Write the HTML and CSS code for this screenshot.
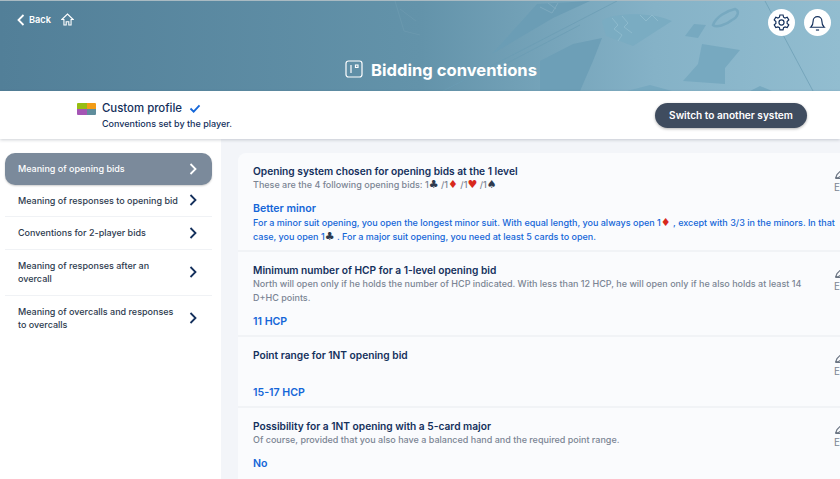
FILE: index.html
```html
<!DOCTYPE html>
<html lang="en">
  <head>
    <meta charset="UTF-8" />
    <title>Bidding conventions</title>
    <link rel="stylesheet" href="styles.css">
  </head>
  <body>
    <header class="banner">
      <svg class="banner-art" viewBox="0 0 840 91" aria-hidden="true">
        <path d="M443 90L617 0M492 70L580 24M765 0L813 90" stroke="#6a9cb3" stroke-width="0.7" fill="none" />
        <path d="M492 53L537 3L590 0L553 17Z" fill="#6b9db5" />
        <path d="M540 60L573 43L602 37L593 60L580 90H540Z" fill="#6d9fb7" />
        <path d="M602 20C610 12 650 10 672 20L633 45L606 35Z" fill="#7aacc2" />
        <path d="M612 17L618 24L614 28L622 34L618 40M622 15L628 22L624 26L632 32M640 14L646 20L652 14L658 20" stroke="#8dbacd" stroke-width="1" fill="none" />
        <path d="M540 6L552 12L558 2M548 2L556 8" stroke="#7eaabf" stroke-width="1" fill="none" />
        <path d="M685 35L694 23L706 24L698 37Z" fill="#77a9c0" />
        <path d="M702 43L740 49L725 67L725 83L683 80L698 63Z" fill="#77a9c0" />
        <path d="M713 24C716 16 726 10 735 8C740 10 738 16 732 19C726 24 716 27 713 24Z" fill="none" stroke="#77a9c0" stroke-width="2.500" />
        <path d="M627 90L650 84L672 90ZM750 90L760 85L772 90Z" fill="#77a9c0" />
        <path d="M395 0L404 30L420 34M400 8L416 20" stroke="#6a98ae" stroke-width="1" fill="none" />
      </svg>
      <div class="top-bar">
        <a class="back-link">
          <svg class="back-icon" viewBox="0 0 8 12"><path d="M6.500 1L1.500 6L6.500 11" /></svg>
          Back
        </a>
        <svg class="home-icon" viewBox="0 0 12 12"><path d="M.8 6L6 1L11.200 6H9.300V11H7.200V8H4.800V11H2.700V6Z" /></svg>
        <div class="top-actions">
          <button class="round-btn">
            <svg viewBox="0 0 24 24"><circle cx="12" cy="12" r="3.200" /><path d="M10 2.500h4l.6 2.800 1.900 1 2.700-.9 2 3.400-2.100 1.900v2.400l2.100 1.900-2 3.400-2.700-.9-1.900 1-.6 2.800h-4l-.6-2.800-1.900-1-2.700.9-2-3.400 2.100-1.900v-2.400L2.800 8.800l2-3.400 2.700.9 1.900-1z" /></svg>
          </button>
          <button class="round-btn">
            <svg viewBox="0 0 24 24"><path d="M3.500 18c2.200-2 3-4 3-8a5.500 5.500 0 0 1 11 0c0 4 .8 6 3 8Z" /><path d="M10 21.500h4" /></svg>
          </button>
        </div>
      </div>
      <h1 class="banner-title">
        <svg class="title-icon" viewBox="0 0 18 18"><rect x="1" y="1" width="16" height="16" rx="2.500" /><path d="M6 5v8M10.500 5h2.500v2.500h-2.500z" /></svg>
        Bidding conventions
      </h1>
    </header>

    <section class="profile-bar">
      <div class="profile">
        <div class="profile-flag"><i class="green"></i><i class="orange"></i><i class="purple"></i><i class="teal"></i></div>
        <div>
          <div class="profile-name">Custom profile
            <svg class="check" viewBox="0 0 13 10"><path d="M1.500 5L5 8.500L11.500 1.500" /></svg>
          </div>
          <div class="profile-sub">Conventions set by the player.</div>
        </div>
      </div>
      <button class="switch-btn">Switch to another system</button>
    </section>

    <main class="content">
      <nav class="side-nav">
        <a class="nav-item active"><span>Meaning of opening bids</span><svg viewBox="0 0 8 12"><path d="M1.500 1L6.500 6L1.500 11" /></svg></a>
        <a class="nav-item"><span>Meaning of responses to opening bid</span><svg viewBox="0 0 8 12"><path d="M1.500 1L6.500 6L1.500 11" /></svg></a>
        <a class="nav-item"><span>Conventions for 2-player bids</span><svg viewBox="0 0 8 12"><path d="M1.500 1L6.500 6L1.500 11" /></svg></a>
        <a class="nav-item"><span>Meaning of responses after an overcall</span><svg viewBox="0 0 8 12"><path d="M1.500 1L6.500 6L1.500 11" /></svg></a>
        <a class="nav-item"><span>Meaning of overcalls and responses to overcalls</span><svg viewBox="0 0 8 12"><path d="M1.500 1L6.500 6L1.500 11" /></svg></a>
      </nav>

      <div class="panel">
        <article class="row row-first">
          <div class="row-head">
            <div class="row-text">
              <h2>Opening system chosen for opening bids at the 1 level</h2>
              <p class="hint">These are the 4 following opening bids: 1<b class="suit">♣</b> /1<b class="suit red">♦</b> /1<b class="suit red">♥</b> /1<b class="suit">♠</b></p>
            </div>
            <div class="edit"><svg viewBox="0 0 12 12"><path d="M1.500 10.500L3 6.500L8 1.500L10.500 4L5.500 9L1.500 10.500H11" /></svg>Edit</div>
          </div>
          <h3>Better minor</h3>
          <p class="answer">For a minor suit opening, you open the longest minor suit. With equal length, you always open 1<b class="suit red">♦</b> , except with 3/3 in the minors. In that case, you open 1<b class="suit">♣</b> . For a major suit opening, you need at least 5 cards to open.</p>
        </article>
        <article class="row row-hcp">
          <div class="row-head">
            <div class="row-text">
              <h2>Minimum number of HCP for a 1-level opening bid</h2>
              <p class="hint">North will open only if he holds the number of HCP indicated. With less than 12 HCP, he will open only if he also holds at least 14 D+HC points.</p>
            </div>
            <div class="edit"><svg viewBox="0 0 12 12"><path d="M1.500 10.500L3 6.500L8 1.500L10.500 4L5.500 9L1.500 10.500H11" /></svg>Edit</div>
          </div>
          <h3>11 HCP</h3>
        </article>
        <article class="row row-range">
          <div class="row-head">
            <div class="row-text">
              <h2>Point range for 1NT opening bid</h2>
            </div>
            <div class="edit"><svg viewBox="0 0 12 12"><path d="M1.500 10.500L3 6.500L8 1.500L10.500 4L5.500 9L1.500 10.500H11" /></svg>Edit</div>
          </div>
          <h3>15-17 HCP</h3>
        </article>
        <article class="row row-last">
          <div class="row-head">
            <div class="row-text">
              <h2>Possibility for a 1NT opening with a 5-card major</h2>
              <p class="hint">Of course, provided that you also have a balanced hand and the required point range.</p>
            </div>
            <div class="edit"><svg viewBox="0 0 12 12"><path d="M1.500 10.500L3 6.500L8 1.500L10.500 4L5.500 9L1.500 10.500H11" /></svg>Edit</div>
          </div>
          <h3>No</h3>
        </article>
      </div>
    </main>
  </body>
</html>
```

FILE: styles.css
```css
html,
body {
  margin: 0;
  height: 100%;
  overflow: hidden;
}
body {
  font-family: "Inter", "Noto Sans", sans-serif;
  background-color: #f3f5f9;
  color: #14305c;
  display: flex;
  flex-direction: column;
}
h1,
h2,
h3,
p {
  margin: 0;
}

/* Banner */
.banner {
  position: relative;
  height: 91px;
  flex: none;
  box-sizing: border-box;
  border-top: 1px solid #a9bac2;
  background: linear-gradient(90deg, #527f98 0%, #6393aa 50%, #85b2c7 78%, #92bdd0 100%);
  display: flex;
  flex-direction: column;
}
.banner-art {
  position: absolute;
  top: 0;
  left: 0;
  width: 840px;
  height: 91px;
}
.top-bar {
  position: relative;
  display: flex;
  align-items: flex-start;
  padding: 8px 9px 0 17px;
  height: 36px;
}
.back-link {
  display: flex;
  align-items: center;
  gap: 4px;
  margin-top: 5px;
  color: #fff;
  font-size: 9.200px;
  font-weight: 600;
  line-height: 12px;
}
.back-icon {
  width: 8px;
  height: 12px;
}
.back-icon path,
.nav-item path {
  fill: none;
  stroke-width: 1.800;
}
.back-icon path {
  stroke: #fff;
}
.home-icon {
  width: 13px;
  height: 13px;
  margin: 4px 0 0 10px;
  fill: none;
  stroke: #fff;
  stroke-width: 1;
}
.top-actions {
  margin-left: auto;
  display: flex;
  gap: 9px;
}
.round-btn {
  width: 27px;
  height: 27px;
  padding: 4px;
  border: none;
  border-radius: 50%;
  background-color: #fff;
}
.round-btn svg {
  display: block;
  fill: none;
  stroke: #14305c;
  stroke-width: 1.500;
}
.banner-title {
  position: relative;
  margin-top: 15px;
  padding-left: 42px;
  display: flex;
  justify-content: center;
  align-items: center;
  gap: 8px;
  color: #fff;
  font-size: 16.600px;
  font-weight: 700;
  line-height: 20px;
}
.title-icon {
  width: 18px;
  height: 18px;
  margin-top: -3px;
  fill: none;
  stroke: #fff;
  stroke-width: 1.200;
}

/* Profile bar */
.profile-bar {
  flex: none;
  height: 48px;
  box-sizing: border-box;
  display: flex;
  align-items: center;
  justify-content: space-between;
  padding: 0 33px 0 77px;
  background-color: #fff;
  box-shadow: 0 1px 3px rgba(60, 70, 90, 0.25);
  position: relative;
}
.profile {
  display: flex;
  gap: 6px;
}
.profile-flag {
  width: 19px;
  height: 12px;
  margin-top: 3px;
  display: grid;
  grid-template-columns: 1fr 1fr;
  grid-template-rows: 1fr 1fr;
  border-radius: 1px;
  overflow: hidden;
}
.profile-flag .green { background-color: #97bd12; }
.profile-flag .orange { background-color: #f29c16; }
.profile-flag .purple { background-color: #a455b4; }
.profile-flag .teal { background-color: #5f8d9c; }
.profile-name {
  font-size: 11.400px;
  font-weight: 500;
  display: flex;
  align-items: center;
  gap: 7px;
  line-height: 16px;
}
.check {
  width: 12px;
  height: 9px;
  fill: none;
  stroke: #1466d8;
  stroke-width: 2;
}
.profile-sub {
  font-size: 9px;
  font-weight: 500;
  margin-top: 2px;
  line-height: 12px;
}
.switch-btn {
  width: 152px;
  height: 25px;
  padding: 0;
  border: none;
  border-radius: 13px;
  background-color: #3f4c5f;
  color: #fff;
  font-family: inherit;
  font-size: 10.100px;
  font-weight: 600;
  box-shadow: 0 1px 3px rgba(0, 0, 0, 0.3);
}

/* Main area */
.content {
  flex: 1;
  min-height: 0;
  display: flex;
}
.side-nav {
  width: 221px;
  flex: none;
  box-sizing: border-box;
  padding: 14px 9px 0 5px;
  background-color: #fff;
}
.nav-item {
  display: flex;
  align-items: center;
  justify-content: space-between;
  min-height: 32px;
  box-sizing: border-box;
  padding: 9px 15px 9px 13px;
  border-bottom: 1px solid #f0f2f5;
  color: #2d3a4e;
  font-size: 9px;
  font-weight: 500;
  line-height: 13.500px;
}
.nav-item:last-child {
  border-bottom: none;
}
.nav-item span {
  width: 162px;
}
.nav-item svg {
  width: 8px;
  height: 12px;
  flex: none;
}
.nav-item path {
  stroke: #14305c;
}
.nav-item.active {
  min-height: 31px;
  border: none;
  border-radius: 10px;
  background-color: #7b8a9b;
  color: #fff;
  box-shadow: 0 1px 2px rgba(0, 0, 0, 0.2);
}
.nav-item.active path {
  stroke: #fff;
}
.panel {
  width: 640px;
  flex: none;
  margin: 14px 0 0 17px;
  background-color: #fafbfd;
  border-radius: 8px 0 0 0;
}
.row {
  padding: 11px 0 0 15px;
  border-bottom: 2px solid #f1f3f6;
  box-sizing: border-box;
}
.row-first { height: 99px; }
.row-hcp { height: 85px; }
.row-range { height: 71px; }
.row-last {
  height: 80px;
  border-bottom: none;
}
.row-head {
  display: flex;
}
.row-text {
  width: 581px;
  flex: none;
}
.row h2 {
  font-size: 10.200px;
  font-weight: 600;
  line-height: 14px;
}
.hint {
  color: #7b8594;
  font-size: 9px;
  font-weight: 500;
  line-height: 13.500px;
  width: 560px;
}
.row h3 {
  color: #1466d8;
  font-size: 10.600px;
  font-weight: 600;
  line-height: 14px;
  margin-top: 10.500px;
}
.row-range h3 {
  margin-top: 24px;
}
.answer {
  color: #1466d8;
  font-size: 9px;
  font-weight: 500;
  line-height: 13.500px;
  width: 590px;
}
.suit {
  font-family: "DejaVu Sans", sans-serif;
  font-size: 11px;
  line-height: 0;
  font-weight: 400;
  color: #2d3a4e;
}
.suit.red {
  color: #d8291c;
}
.edit {
  height: 14px;
  color: #7b8594;
  font-size: 10px;
  line-height: 12px;
  display: flex;
  flex-direction: column;
  gap: 1px;
  padding-top: 4px;
  box-sizing: border-box;
}
.edit svg {
  width: 12px;
  height: 12px;
  flex: none;
  fill: none;
  stroke: #6a7482;
  stroke-width: 1.200;
}
```
